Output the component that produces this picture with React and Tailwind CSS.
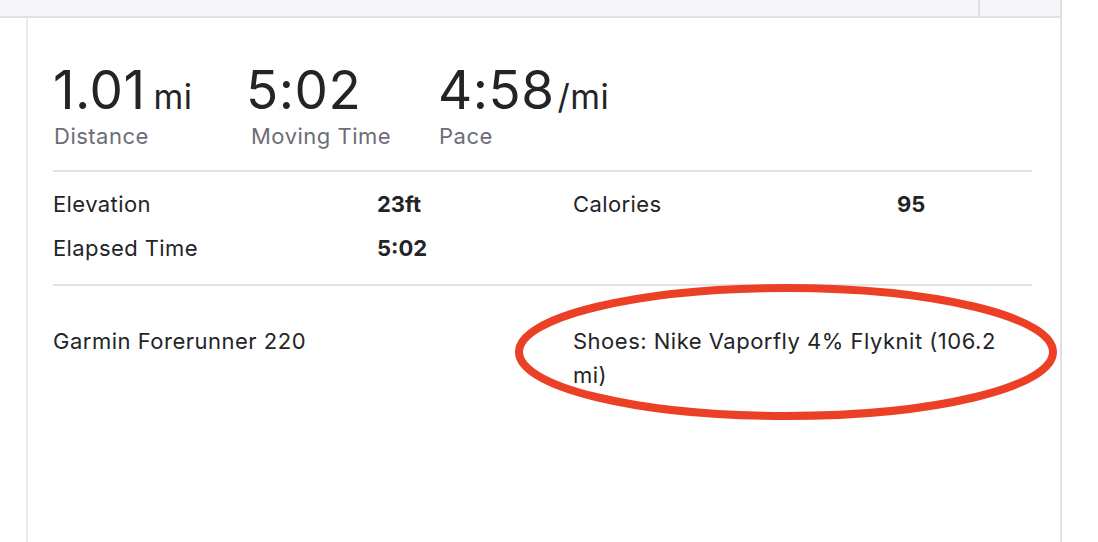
import React from "react";

const Stat = ({ value, unit, unitGap = "ml-[8px]", label, width, labelClass = "" }) => (
  <div className={width}>
    <div className="flex items-baseline h-[52px] text-[#242428]">
      <span className="text-[53px] leading-[52px] tracking-[0.5px]">{value}</span>
      {unit && <span className={"text-[34px] leading-[34px] tracking-[0.5px] " + unitGap}>{unit}</span>}
    </div>
    <div className={"text-[22px] leading-[28px] tracking-[0.5px] text-[#6d6d78] mt-[6px] " + labelClass}>{label}</div>
  </div>
);

const Row = ({ label, value }) => (
  <div className="flex items-center h-[44px]">
    <span className="w-[324px] text-[22px] tracking-[0.4px]">{label}</span>
    <span className="text-[22px] font-bold">{value}</span>
  </div>
);

export default function App() {
  return (
    <div
      className="relative w-[1098px] h-[542px] bg-white overflow-hidden text-[#242428]"
      style={{ fontFamily: "Inter, 'Noto Sans', sans-serif" }}
    >
      {/* top tab strip */}
      <div className="flex w-[1062px] h-[18px] bg-[#f7f7fa] border-b-2 border-r-2 border-[#dfdfe8]">
        <div className="flex-1 border-r-2 border-[#dfdfe8]" />
        <div className="w-[80px]" />
      </div>

      {/* panel */}
      <div className="ml-[26px] w-[1036px] h-[524px] border-l-2 border-r-2 border-l-[#ececf0] border-r-[#dfdfe8] pl-[25px] pr-[28px]">
        <div className="flex pt-[46px] pb-[20px]">
          <Stat value="1.01" unit="mi" label="Distance" width="w-[193px]" labelClass="ml-[1px]" />
          <Stat value="5:02" label="Moving Time" width="w-[192px]" labelClass="ml-[5px]" />
          <Stat value="4:58" unit="/mi" unitGap="ml-[3px]" label="Pace" width="w-[200px]" labelClass="ml-[1px]" />
        </div>

        <div className="border-t-2 border-[#e3e3ea] grid grid-cols-2 gap-x-[61px] pt-[10px] pb-[14px]">
          <div>
            <Row label="Elevation" value="23ft" />
            <Row label="Elapsed Time" value="5:02" />
          </div>
          <div>
            <Row label="Calories" value="95" />
          </div>
        </div>

        <div className="border-t-2 border-[#e3e3ea] grid grid-cols-2 gap-x-[61px] pt-[38px] text-[22px] leading-[34px] tracking-[0.5px]">
          <div>Garmin Forerunner 220</div>
          <div>Shoes: Nike Vaporfly 4% Flyknit (106.2 mi)</div>
        </div>
      </div>

      {/* hand-drawn annotation */}
      <svg className="absolute left-0 top-0 pointer-events-none" width="1098" height="542">
        <ellipse cx="786" cy="352" rx="267" ry="64" fill="none" stroke="#ec4026" strokeWidth="8" />
      </svg>
    </div>
  );
}
